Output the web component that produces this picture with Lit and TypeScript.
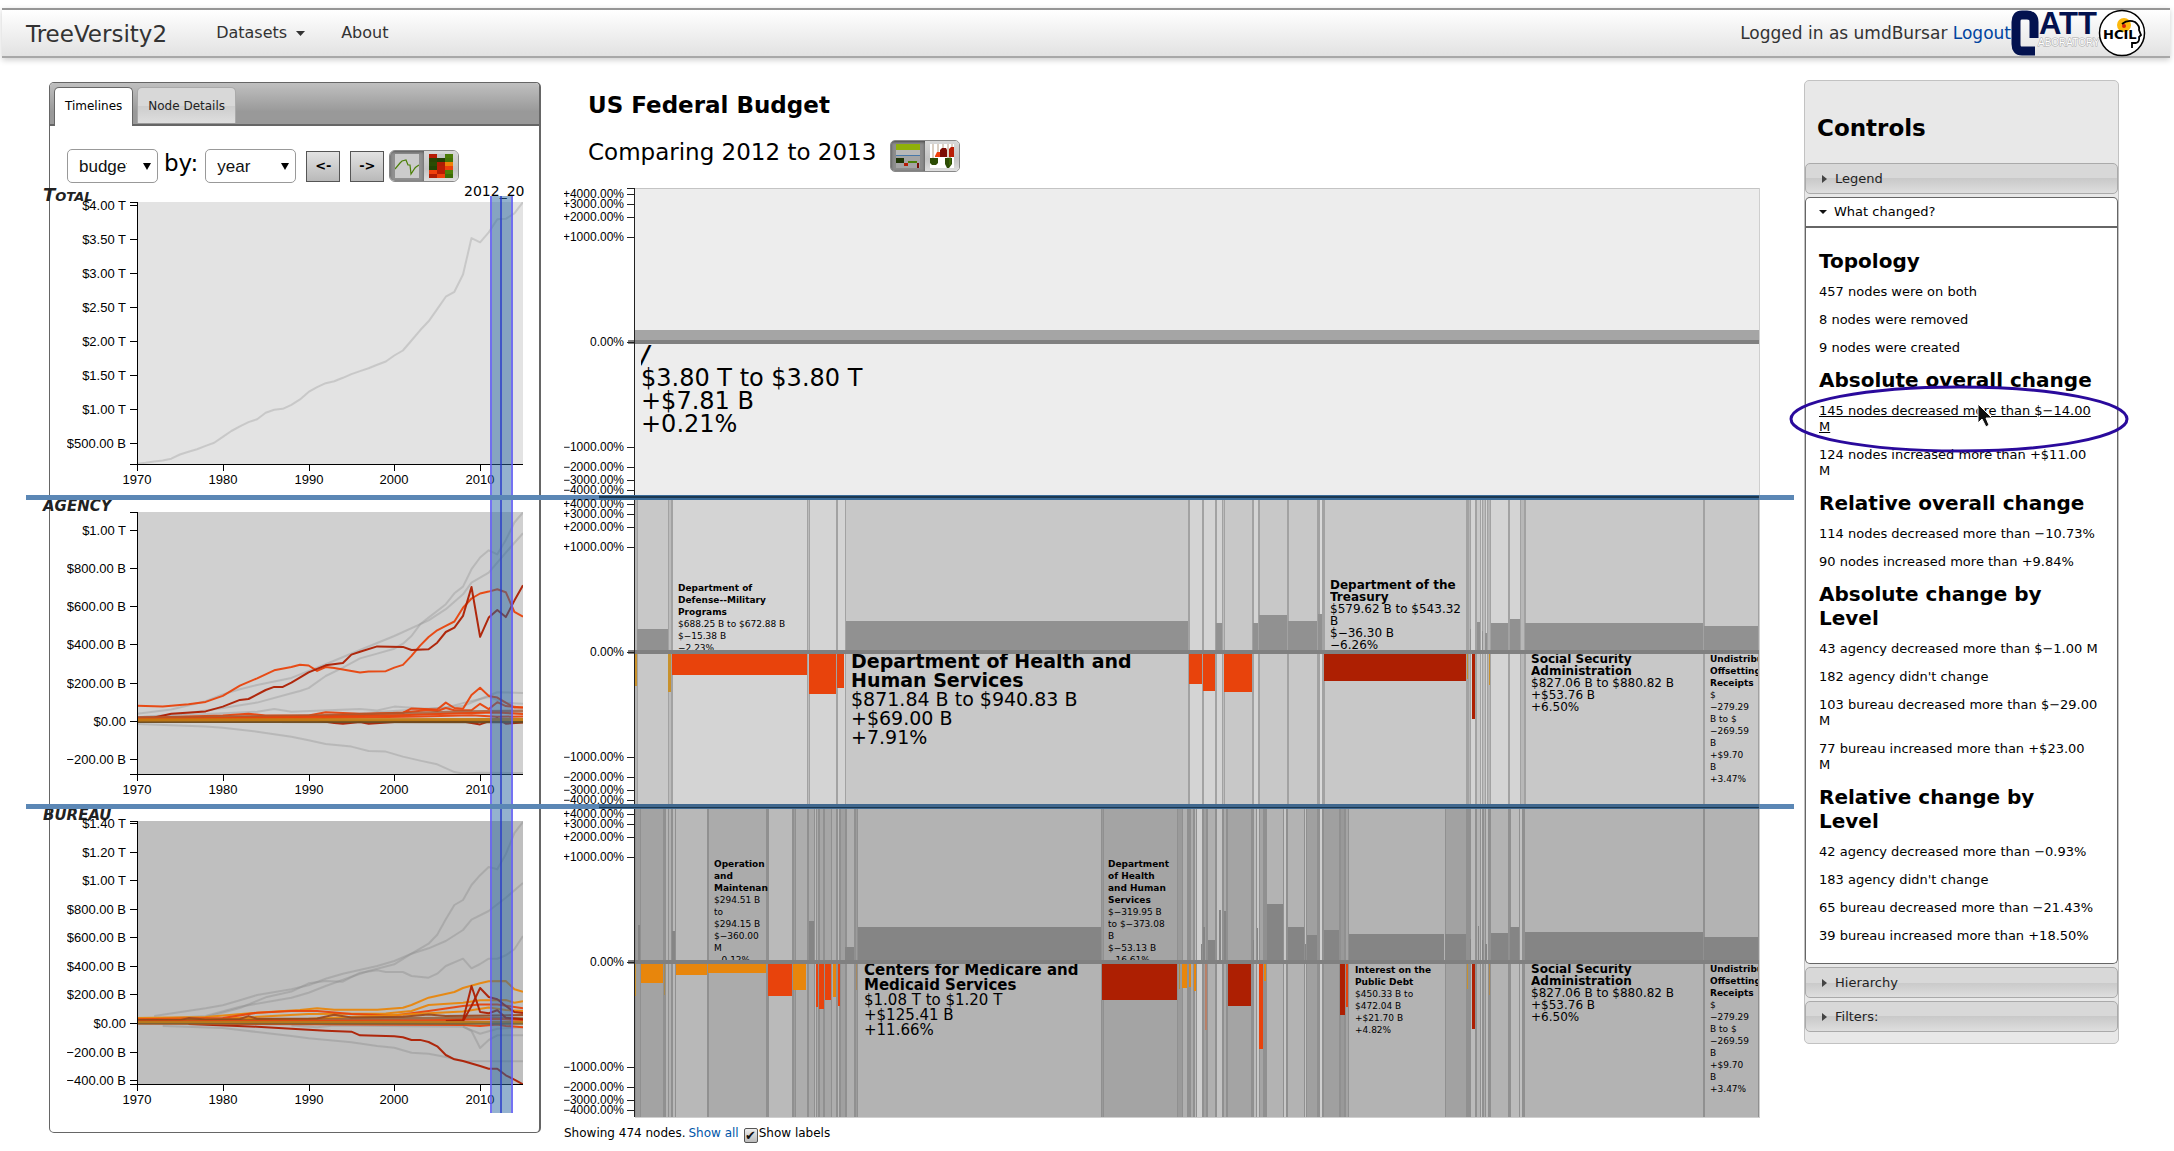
import { LitElement, html, svg, css } from "lit";
import { customElement } from "lit/decorators.js";

type Pt = [number, number];
interface Series { color: string; w?: number; o?: number; pts: Pt[] }
interface Chart {
  name: string; cls: string; nameY: number; top: number; bottom: number; zero: number;
  perBillion: number; fill: string; ticks: [number, string][]; series: Series[];
}

const GRAY = "#8c8c8c";
const ORANGE = "#e8430c";
const AMBER = "#e8860c";
const RED = "#ad1f02";

const yearly = (start: number, values: number[]): Pt[] => values.map((v, i) => [start + i, v] as Pt);

const charts: Chart[] = [
  {
    name: "Total", cls: "caps", nameY: 202, top: 203, bottom: 465, zero: 478, perBillion: 0.0679, fill: "#e3e3e3",
    ticks: [[4000, "$4.00 T"], [3500, "$3.50 T"], [3000, "$3.00 T"], [2500, "$2.50 T"], [2000, "$2.00 T"], [1500, "$1.50 T"], [1000, "$1.00 T"], [500, "$500.00 B"]],
    series: [{
      color: GRAY, o: 0.3,
      pts: yearly(1970, [195, 210, 230, 245, 269, 332, 371, 409, 458, 504, 590, 678, 745, 808, 851, 946, 990, 1004, 1064, 1143, 1253, 1324, 1381, 1409, 1461, 1515, 1560, 1601, 1652, 1701, 1789, 1863, 2011, 2160, 2293, 2472, 2655, 2728, 2982, 3518, 3457, 3603, 3796, 3803, 3883, 4050]),
    }],
  },
  {
    name: "AGENCY", cls: "", nameY: 512, top: 513, bottom: 775, zero: 722, perBillion: 0.1914, fill: "#d0d0d0",
    ticks: [[1000, "$1.00 T"], [800, "$800.00 B"], [600, "$600.00 B"], [400, "$400.00 B"], [200, "$200.00 B"], [0, "$0.00"], [-200, "$−200.00 B"]],
    series: [
      { color: GRAY, o: 0.35, pts: [[1970, 20], [1975, 35], [1980, 68], [1984, 96], [1988, 145], [1989, 157], [1990, 172], [1992, 235], [1994, 279], [1996, 327], [1998, 352], [2000, 378], [2001, 404], [2002, 444], [2003, 505], [2004, 540], [2006, 610], [2007, 667], [2008, 702], [2009, 793], [2010, 854], [2011, 892], [2012, 871], [2013, 946], [2014, 1037], [2015, 1090]] },
      { color: GRAY, o: 0.35, pts: [[1970, 38], [1974, 60], [1978, 103], [1980, 139], [1982, 166], [1984, 188], [1988, 225], [1992, 296], [1996, 371], [2000, 444], [2004, 526], [2006, 584], [2008, 662], [2009, 723], [2011, 775], [2013, 880], [2015, 981]] },
      { color: GRAY, o: 0.35, pts: [[1970, -15], [1974, -22], [1978, -28], [1980, -35], [1984, -56], [1988, -82], [1990, -101], [1992, -120], [1995, -134], [1997, -157], [1999, -160], [2001, -186], [2003, -207], [2005, -226], [2007, -267], [2008, -275], [2010, -270], [2015, -272]] },
      { color: GRAY, o: 0.35, pts: [[1970, 20], [1980, 40], [1984, 48], [1986, 62], [1988, 48], [1996, 62], [1998, 55], [2000, 75], [2004, 62], [2008, 78], [2010, 115], [2012, 150], [2015, 147]] },
      { color: GRAY, o: 0.35, pts: [[1984, 20], [1996, 40], [2006, 70], [2009, 105], [2011, 125], [2013, 95], [2015, 90]] },
      { color: ORANGE, pts: [[1970, 80], [1973, 76], [1976, 88], [1978, 100], [1980, 131], [1982, 185], [1984, 223], [1986, 265], [1988, 282], [1989, 294], [1990, 290], [1991, 262], [1992, 282], [1993, 277], [1996, 254], [1997, 258], [1999, 260], [2000, 279], [2001, 293], [2002, 340], [2003, 394], [2004, 439], [2005, 474], [2006, 497], [2007, 520], [2008, 592], [2009, 640], [2010, 666], [2011, 676], [2012, 688], [2013, 673], [2014, 570], [2015, 545]] },
      { color: RED, pts: [[1970, 19], [1972, 19], [1974, 38], [1978, 50], [1980, 75], [1982, 110], [1983, 115], [1985, 162], [1986, 178], [1987, 178], [1988, 200], [1990, 254], [1992, 291], [1994, 303], [1995, 347], [1996, 362], [1998, 390], [2001, 387], [2002, 371], [2004, 375], [2005, 409], [2006, 465], [2007, 488], [2008, 549], [2009, 700], [2010, 440], [2011, 540], [2012, 580], [2013, 543], [2014, 629], [2015, 709]] },
      { color: ORANGE, pts: [[1970, 16], [1980, 28], [1983, 38], [1985, 28], [1990, 28], [1992, 46], [1996, 38], [2001, 42], [2002, 66], [2005, 60], [2006, 96], [2007, 68], [2008, 64], [2009, 136], [2010, 174], [2011, 131], [2012, 122], [2013, 96], [2014, 70], [2015, 70]] },
      { color: ORANGE, pts: [[1970, 12], [1990, 26], [1996, 34], [2001, 44], [2004, 58], [2005, 52], [2006, 68], [2007, 56], [2009, 56], [2010, 90], [2011, 62], [2012, 98], [2013, 78], [2015, 70]] },
      { color: "#a65a32", w: 3, o: 0.8, pts: [[1970, 14], [1980, 22], [1990, 26], [2000, 38], [2008, 48], [2015, 52]] },
      { color: ORANGE, pts: [[1970, 8], [1985, 18], [2000, 28], [2008, 40], [2012, 44], [2015, 36]] },
      { color: ORANGE, pts: [[1970, 10], [1990, 14], [2003, 24], [2009, 30], [2012, 22], [2015, 24]] },
      { color: RED, pts: [[1970, 2], [1991, 2], [1993, -10], [1994, -14], [1996, -6], [1997, -14], [2000, -6], [2008, -2], [2010, -18], [2012, 14], [2013, -14], [2015, -8]] },
      { color: "#6b4a1e", w: 3, pts: [[1970, -2], [2015, -4]] },
      { color: "#c27a12", w: 3, pts: [[1970, 5], [2015, 8]] },
    ],
  },
  {
    name: "BUREAU", cls: "", nameY: 821, top: 822, bottom: 1085, zero: 1024, perBillion: 0.1429, fill: "#bfbfbf",
    ticks: [[1400, "$1.40 T"], [1200, "$1.20 T"], [1000, "$1.00 T"], [800, "$800.00 B"], [600, "$600.00 B"], [400, "$400.00 B"], [200, "$200.00 B"], [0, "$0.00"], [-200, "$−200.00 B"], [-400, "$−400.00 B"]],
    series: [
      { color: GRAY, o: 0.4, pts: [[1972, 49], [1978, 103], [1980, 124], [1982, 159], [1984, 196], [1988, 236], [1990, 264], [1992, 310], [1994, 345], [1998, 399], [2000, 434], [2002, 485], [2004, 523], [2006, 574], [2008, 651], [2009, 723], [2011, 784], [2013, 877], [2015, 980]] },
      { color: GRAY, o: 0.4, pts: [[1970, 20], [1978, 49], [1982, 114], [1988, 177], [1990, 212], [1992, 259], [1995, 324], [1997, 364], [2000, 411], [2002, 485], [2004, 555], [2005, 618], [2006, 726], [2007, 826], [2008, 861], [2009, 966], [2010, 1034], [2011, 1092], [2012, 1076], [2013, 1181], [2014, 1328], [2015, 1407]] },
      { color: GRAY, o: 0.4, pts: [[1978, 40], [1982, 105], [1985, 180], [1988, 220], [1990, 278], [1992, 294], [1994, 289], [1996, 352], [1998, 369], [1999, 357], [2001, 357], [2002, 329], [2004, 317], [2005, 345], [2006, 399], [2008, 450], [2009, 383], [2010, 413], [2011, 450], [2012, 450], [2013, 474], [2014, 516], [2015, 609]] },
      { color: GRAY, o: 0.4, pts: [[1973, -20], [1980, -35], [1984, -63], [1988, -91], [1990, -107], [1995, -135], [1998, -161], [2000, -173], [2002, -208], [2004, -215], [2006, -238], [2008, -266], [2015, -268]] },
      { color: GRAY, o: 0.4, pts: [[1988, -18], [1991, -30], [1993, -18], [2008, -26], [2010, -75], [2012, -40], [2015, -30]] },
      { color: GRAY, o: 0.4, pts: [[2008, -24], [2009, -56], [2010, -175], [2011, -119], [2012, -86], [2015, -86]] },
      { color: AMBER, pts: [[1970, 34], [1978, 42], [1984, 72], [1989, 92], [1991, 103], [1993, 93], [1998, 93], [2001, 107], [2002, 126], [2004, 177], [2007, 217], [2008, 245], [2010, 278], [2011, 292], [2013, 294], [2014, 236], [2015, 219]] },
      { color: AMBER, pts: [[1980, 30], [1990, 62], [1999, 66], [2002, 84], [2004, 126], [2008, 142], [2010, 159], [2013, 161], [2014, 142], [2015, 152]] },
      { color: ORANGE, pts: [[1970, 26], [1980, 34], [1984, 72], [1988, 84], [1991, 84], [1995, 62], [2000, 52], [2004, 84], [2008, 119], [2010, 130], [2012, 130], [2015, 103]] },
      { color: AMBER, pts: [[1970, 22], [1990, 30], [2000, 56], [2008, 80], [2011, 108], [2013, 90], [2015, 84]] },
      { color: "#9c4a20", pts: [[1970, 22], [1975, 20], [1976, 34], [1978, 24], [1982, 28], [1983, 48], [1984, 30], [1991, 32], [1993, 58], [1995, 38], [2001, 44], [2004, 60], [2006, 48], [2015, 56]] },
      { color: "#8a4a1c", w: 3, o: 0.7, pts: [[1970, 16], [1990, 22], [2000, 32], [2010, 36], [2015, 30]] },
      { color: ORANGE, pts: [[1970, 10], [1990, 16], [2003, 18], [2012, 28], [2015, 20]] },
      { color: RED, pts: [[2006, 14], [2008, 19], [2009, 259], [2010, 77], [2011, 68], [2012, 89], [2013, 37], [2015, 26]] },
      { color: RED, pts: [[2008, 12], [2009, 119], [2010, 245], [2011, 182], [2012, 166], [2013, 119], [2014, 77], [2015, 70]] },
      { color: RED, pts: [[1976, -6], [1984, -26], [1988, -40], [1992, -54], [1995, -61], [1996, -86], [2000, -93], [2001, -100], [2002, -119], [2003, -118], [2004, -133], [2005, -163], [2006, -224], [2007, -254], [2008, -266], [2010, -301], [2011, -320], [2012, -320], [2013, -366], [2014, -397], [2015, -429]] },
      { color: ORANGE, pts: [[1970, -4], [2008, -14], [2010, -22], [2012, -10], [2013, -20], [2015, -30]] },
      { color: "#7d6332", w: 3, pts: [[1970, 0], [2015, -2]] },
      { color: "#b87a1c", pts: [[1970, 8], [2015, 8]] },
    ],
  },
];

const years = [1970, 1980, 1990, 2000, 2010];
const yearX = (y: number) => 137 + ((y - 1970) * 386) / 45;

const fontStack = css`"DejaVu Sans", Verdana, sans-serif`;

@customElement("timelines-panel")
export class TimelinesPanel extends LitElement {
  static styles = css`
    :host { display: block; font-family: ${fontStack}; }
    .panel { border: 1px solid #666; border-right-width: 2px; border-radius: 5px; background: #fff; }
    .tabs {
      display: flex; gap: 4px; height: 37px; padding: 4px 4px 0; border-bottom: 2px solid #666;
      border-radius: 4px 4px 0 0; background: linear-gradient(#c0c0c0, #999 70%, #999);
    }
    .tab {
      font: 12px/16px ${fontStack}; border: 1px solid #aaa; border-bottom: 0; border-radius: 5px 5px 0 0;
      background: linear-gradient(#d8d8d8 50%, #ccc 50%, #dedede); color: #222; padding: 0 10px; height: 36px;
    }
    .tab.active { background: #fff; border-color: #666; color: #000; height: 39px; padding-bottom: 3px; }
    .tools { display: flex; align-items: center; height: 40px; padding: 20px 0 0 17px; }
    select {
      appearance: none; width: 91px; height: 34px; border: 1px solid #999; border-radius: 5px; color: #111;
      font: 17px/24px "Liberation Sans", Arial, sans-serif; padding: 2px 30px 0 11px; text-overflow: clip; background: #fff;
    }
    .pick { display: grid; align-items: center; }
    .pick > * { grid-area: 1 / 1; }
    .arrow { justify-self: end; margin-right: 7px; width: 8px; height: 8px; pointer-events: none; }
    .by { font-size: 23px; line-height: 28px; padding: 0 7px 6px 6px; }
    .step {
      width: 34px; height: 31px; border: 1px solid #555; background: linear-gradient(#e2e2e2, #b9b9b9);
      font: bold 13px/16px ${fontStack}; padding: 0; margin-left: 10px;
    }
    .group { display: flex; margin-left: 5px; border-radius: 6px; overflow: hidden; border: 1px solid #888; height: 30px; }
    .mode { display: grid; place-items: center; width: 34px; border: 0; padding: 0; background: linear-gradient(#d8d8d8, #c4c4c4 60%, #dedede); }
    .mode.on { background: #909090; box-shadow: inset 0 1px 3px #555; }
    .mode svg { width: 24px; height: 24px; display: block; }
    .charts { display: block; width: 100%; overflow: visible; }
    .tick { font: 13px "Liberation Sans", Arial, sans-serif; fill: #000; }
    .end { text-anchor: end; }
    .mid { text-anchor: middle; }
    .name { font: italic bold 15px ${fontStack}; fill: #222; }
    .name.caps { font: italic bold 18px ${fontStack}; font-variant: small-caps; }
    .brush-label { font: 14px ${fontStack}; fill: #000; }
    .axis { stroke: #000; stroke-width: 1; fill: none; shape-rendering: crispEdges; }
    .line { fill: none; stroke-linejoin: round; }
  `;

  private chart(c: Chart) {
    const y = (v: number) => c.zero - v * c.perBillion;
    const shown = c.top - 8;
    const shownHeight = c.bottom - shown + 8;
    return svg`
      <text class="name ${c.cls}" x="43" y=${c.nameY}>${c.name}</text>
      <rect x="137" y=${c.top} width="386" height=${c.bottom - c.top} fill=${c.fill}></rect>
      <svg x="137" y=${c.top} width="386" height=${c.bottom - c.top} viewBox=${`137 ${c.top} 386 ${c.bottom - c.top}`}>
        ${c.series.map((s) => svg`<polyline class="line" stroke=${s.color} stroke-width=${s.w ?? 2} stroke-opacity=${s.o ?? 0.95}
          points=${s.pts.map(([t, v]) => `${yearX(t).toFixed(1)},${y(v).toFixed(1)}`).join(" ")}></polyline>`)}
      </svg>
      <path class="axis" d=${`M130 ${c.top}H137V${c.bottom}M130 ${c.bottom}H523`}></path>
      <svg x="67" y=${shown} width="63" height=${shownHeight} viewBox=${`67 ${shown} 63 ${shownHeight}`}>
        ${c.ticks.map(([v, label]) => svg`<text class="tick end" x="126" y=${Math.round(y(v)) + 5}>${label}</text>`)}
      </svg>
      ${c.ticks.map(([v]) => svg`<path class="axis" d=${`M130 ${Math.round(y(v))}H137`}></path>`)}
      ${years.map((t) => svg`
        <path class="axis" d=${`M${Math.round(yearX(t))} ${c.bottom}v7`}></path>
        <text class="tick mid" x=${Math.round(yearX(t))} y=${c.bottom + 20}>${t}</text>`)}
    `;
  }

  render() {
    const heat = [
      ["#b81c04", "#c4c4c4", "#4c7c08"], ["#2c4404", "#244004", "#447408"], ["#2c4c04", "#b01c04", "#f08008"],
      ["#244404", "#b81c04", "#ec400c"], ["#f0400c", "#b81c04", "#4c8008"], ["#b01c04", "#ec400c", "#3c6c08"],
    ];
    return html`
      <section class="panel">
        <div class="tabs" role="tablist">
          <button class="tab active" role="tab" aria-selected="true">Timelines</button>
          <button class="tab" role="tab" aria-selected="false">Node Details</button>
        </div>
        <div class="tools">
          <span class="pick">
            <select id="measure" aria-label="Measure"><option>budget</option></select>
            <svg class="arrow" viewBox="0 0 8 8"><path d="M0 1H8L4 8Z"/></svg>
          </span>
          <label class="by" for="period">by:</label>
          <span class="pick">
            <select id="period"><option>year</option></select>
            <svg class="arrow" viewBox="0 0 8 8"><path d="M0 1H8L4 8Z"/></svg>
          </span>
          <button class="step">&lt;-</button>
          <button class="step">-&gt;</button>
          <div class="group">
            <button class="mode on" aria-label="Lines">
              <svg viewBox="0 0 24 24"><rect width="24" height="24" fill="#cbcbcb"/><path d="M0 15L5 9L7 7L11 6L13 11L15 11L16 20L20 14L21 13L24 11" fill="none" stroke="#4c8008" stroke-width="1.2"/></svg>
            </button>
            <button class="mode" aria-label="Heat map">
              <svg viewBox="0 0 24 24">${heat.map((r, i) => r.map((f, j) => svg`<rect x=${j * 8} y=${i * 4} width="8" height="4" fill=${f}></rect>`))}</svg>
            </button>
          </div>
        </div>
        <svg class="charts" viewBox="50 187 489 946">
          ${charts.map((c) => this.chart(c))}
          <text class="brush-label" x="464" y="197">2012_20</text>
          <rect x="490" y="197" width="23" height="917" fill="#2a66a0" fill-opacity="0.5"></rect>
          <path d="M491 197V1114M512 197V1114" stroke="#6a5cff" stroke-width="2" stroke-opacity="0.75"></path>
          <path d="M501 197V1114" stroke="#2a3cc8" stroke-width="2" stroke-opacity="0.75"></path>
        </svg>
      </section>
    `;
  }
}

interface Label { x: number; y: number; w: number; size: number; pitch: number; bold: string[]; text: string[]; slant?: boolean }
interface Row { top: number; bottom: number; zero: number; base: string; bar: string; cells: [number, number, string][]; bars: [number, number, number, string?][]; labels: Label[] }

const L = "#d4d4d4";
const M = "#c8c8c8";
const OCHRE = "#c8912c";

const undistributed = {
  bold: ["Undistributed", "Offsetting", "Receipts"],
  text: ["$", "−279.29", "B to $", "−269.59", "B", "+$9.70", "B", "+3.47%"],
};

const rows: Row[] = [
  {
    top: 188, bottom: 497, zero: 342, base: "#ededed", bar: "#a5a5a5",
    cells: [], bars: [[635, 1759, 330]],
    labels: [{ x: 641, y: 363, w: 400, size: 24, pitch: 23, slant: true, bold: ["/"], text: ["$3.80 T to $3.80 T", "+$7.81 B", "+0.21%"] }],
  },
  {
    top: 498, bottom: 806, zero: 652, base: "#a2a2a2", bar: "#919191",
    cells: [
      [635, 637, "#b4b4b4"], [638, 668, M], [669, 671, "#bbb"], [673, 807, L], [808, 809, "#bbb"], [810, 836, L], [838, 845, L],
      [846, 1188, M], [1190, 1202, L], [1204, 1215, L], [1217, 1222, L], [1223, 1224, "#bbb"], [1225, 1252, M], [1254, 1258, L],
      [1260, 1287, M], [1289, 1317, M], [1320, 1322, "#dadada"], [1325, 1466, M], [1469, 1470, "#b4b4b4"], [1471, 1475, L],
      [1477, 1480, M], [1481, 1482, L], [1483, 1485, "#bbb"], [1486, 1487, L], [1488, 1490, "#b4b4b4"], [1491, 1508, L],
      [1510, 1520, L], [1521, 1524, "#b8b8b8"], [1526, 1703, M], [1705, 1758, M],
    ],
    bars: [
      [635, 637, 686, OCHRE], [637, 668, 629], [668, 671, 692, OCHRE], [672, 807, 675, ORANGE], [809, 836, 694, ORANGE], [837, 844, 688, ORANGE],
      [846, 1188, 621], [1189, 1202, 684, ORANGE], [1203, 1215, 691, ORANGE], [1216, 1222, 623], [1224, 1252, 692, ORANGE],
      [1253, 1258, 623], [1259, 1287, 615], [1288, 1317, 621], [1318, 1322, 614], [1324, 1466, 681, RED], [1467, 1468, 679, OCHRE],
      [1470, 1471, 629], [1472, 1475, 719, RED], [1477, 1480, 622], [1482, 1483, 631], [1485, 1487, 633], [1489, 1490, 685, OCHRE],
      [1491, 1508, 623], [1510, 1520, 619], [1525, 1703, 623], [1704, 1758, 626],
    ],
    labels: [
      { x: 678, y: 591, w: 128, size: 9, pitch: 12, bold: ["Department of", "Defense--Military", "Programs"], text: ["$688.25 B to $672.88 B", "$−15.38 B", "−2.23%"] },
      { x: 851, y: 668, w: 330, size: 19, pitch: 19, bold: ["Department of Health and", "Human Services"], text: ["$871.84 B to $940.83 B", "+$69.00 B", "+7.91%"] },
      { x: 1330, y: 589, w: 136, size: 12, pitch: 12, bold: ["Department of the", "Treasury"], text: ["$579.62 B to $543.32", "B", "$−36.30 B", "−6.26%"] },
      { x: 1531, y: 663, w: 170, size: 12, pitch: 12, bold: ["Social Security", "Administration"], text: ["$827.06 B to $880.82 B", "+$53.76 B", "+6.50%"] },
      { x: 1710, y: 662, w: 48, size: 9, pitch: 12, ...undistributed },
    ],
  },
  {
    top: 807, bottom: 1117, zero: 962, base: "#909090", bar: "#858585",
    cells: [
      [636, 640, "#9c9c9c"], [641, 663, "#a3a3a3"], [666, 668, "#b4b4b4"], [669, 671, "#b0b0b0"], [673, 675, "#b8b8b8"], [676, 707, "#b8b8b8"],
      [709, 766, "#ababab"], [769, 792, "#bababa"], [794, 795, "#9c9c9c"], [796, 807, "#adadad"], [809, 814, "#a9a9a9"], [815, 816, "#bbb"],
      [817, 818, "#aaa"], [820, 823, "#a6a6a6"], [825, 831, "#a6a6a6"], [832, 836, "#adadad"], [838, 839, "#bbb"], [841, 845, "#a0a0a0"],
      [847, 854, "#b0b0b0"], [856, 857, "#9c9c9c"], [858, 1101, "#b3b3b3"], [1102, 1103, "#999"], [1104, 1177, "#a4a4a4"], [1178, 1182, "#9a9a9a"],
      [1183, 1187, "#b0b0b0"], [1191, 1193, "#aaa"], [1195, 1196, "#bbb"], [1197, 1202, "#cfcfcf"], [1204, 1206, "#a0a0a0"], [1208, 1215, "#b0b0b0"],
      [1217, 1222, "#c4c4c4"], [1224, 1226, "#aaa"], [1228, 1251, "#a4a4a4"], [1254, 1256, "#bbb"], [1257, 1259, "#c8c8c8"], [1260, 1263, "#a4a4a4"],
      [1267, 1283, "#b3b3b3"], [1284, 1286, "#c8c8c8"], [1288, 1304, "#b3b3b3"], [1305, 1306, "#c4c4c4"], [1307, 1317, "#a0a0a0"], [1320, 1322, "#d0d0d0"],
      [1324, 1339, "#a0a0a0"], [1341, 1344, "#999"], [1346, 1348, "#a4a4a4"], [1349, 1445, "#b3b3b3"], [1446, 1466, "#a2a2a2"], [1471, 1475, "#bbb"],
      [1477, 1480, "#b3b3b3"], [1481, 1482, "#c4c4c4"], [1484, 1485, "#aaa"], [1486, 1488, "#bbb"], [1491, 1508, "#b3b3b3"], [1511, 1519, "#bbb"],
      [1520, 1522, "#c0c0c0"], [1525, 1703, "#b3b3b3"], [1705, 1758, "#b3b3b3"],
    ],
    bars: [
      [635, 636, 996, OCHRE], [638, 640, 925], [641, 663, 983, AMBER], [664, 665, 995, "#a88a50"], [672, 675, 931], [676, 707, 975, AMBER],
      [708, 766, 973, AMBER], [768, 792, 996, ORANGE], [793, 806, 990, AMBER], [809, 814, 921], [816, 818, 1007, ORANGE], [819, 824, 1009, ORANGE],
      [825, 831, 1000, ORANGE], [833, 836, 997, AMBER], [838, 840, 1006, ORANGE], [845, 854, 947], [856, 857, 990, "#a88a60"], [858, 1101, 927],
      [1102, 1177, 1000, RED], [1179, 1180, 989, "#b08a40"], [1182, 1187, 988, AMBER], [1189, 1191, 987, AMBER], [1194, 1196, 991, AMBER],
      [1201, 1202, 944], [1203, 1205, 927], [1205, 1207, 1030, "#b88068"], [1208, 1215, 940], [1219, 1221, 910], [1224, 1226, 911],
      [1228, 1251, 1006, RED], [1253, 1254, 940], [1257, 1258, 928], [1259, 1263, 1049, ORANGE], [1264, 1266, 981, AMBER], [1267, 1283, 904],
      [1288, 1304, 927], [1305, 1306, 944], [1307, 1317, 935], [1324, 1339, 930], [1340, 1345, 1015, RED], [1346, 1348, 1007, ORANGE],
      [1349, 1444, 934], [1445, 1466, 934], [1467, 1468, 989, OCHRE], [1470, 1471, 939], [1472, 1475, 1029, RED], [1478, 1479, 926],
      [1482, 1483, 940], [1485, 1487, 944], [1489, 1490, 995, "#b08a50"], [1491, 1508, 933], [1510, 1519, 927], [1525, 1703, 932], [1704, 1758, 937],
    ],
    labels: [
      { x: 714, y: 867, w: 54, size: 9, pitch: 12, bold: ["Operation", "and", "Maintenance"], text: ["$294.51 B", "to", "$294.15 B", "$−360.00", "M", "−0.12%"] },
      { x: 864, y: 975, w: 234, size: 15, pitch: 15, bold: ["Centers for Medicare and", "Medicaid Services"], text: ["$1.08 T to $1.20 T", "+$125.41 B", "+11.66%"] },
      { x: 1108, y: 867, w: 68, size: 9, pitch: 12, bold: ["Department", "of Health", "and Human", "Services"], text: ["$−319.95 B", "to $−373.08", "B", "$−53.13 B", "−16.61%"] },
      { x: 1355, y: 973, w: 90, size: 9, pitch: 12, bold: ["Interest on the", "Public Debt"], text: ["$450.33 B to", "$472.04 B", "+$21.70 B", "+4.82%"] },
      { x: 1531, y: 973, w: 170, size: 12, pitch: 12, bold: ["Social Security", "Administration"], text: ["$827.06 B to $880.82 B", "+$53.76 B", "+6.50%"] },
      { x: 1710, y: 972, w: 48, size: 9, pitch: 12, ...undistributed },
    ],
  },
];

const percentTicks: [number, string][] = [
  [-148, "+4000.00%"], [-138, "+3000.00%"], [-125, "+2000.00%"], [-105, "+1000.00%"], [0, "0.00%"],
  [105, "−1000.00%"], [125, "−2000.00%"], [138, "−3000.00%"], [148, "−4000.00%"],
];

@customElement("budget-map")
export class BudgetMap extends LitElement {
  static styles = css`
    :host { display: block; font-family: ${fontStack}; color: #000; }
    .head { padding-left: 24px; height: 105px; box-sizing: border-box; padding-top: 9px; }
    h1 { margin: 0; font-size: 23px; line-height: 28px; font-weight: bold; }
    .sub { display: flex; align-items: center; gap: 14px; margin-top: 18px; height: 32px; font-size: 23px; line-height: 28px; }
    .sub p { margin: 0 0 2px; }
    .group { display: flex; border-radius: 5px; overflow: hidden; border: 1px solid #888; height: 30px; margin-top: 5px; }
    .mode { display: grid; place-items: center; width: 34px; border: 0; padding: 0; background: linear-gradient(#d8d8d8, #c4c4c4 60%, #dedede); }
    .mode.on { background: #8c8c8c; box-shadow: inset 0 1px 3px #444; }
    .mode svg { width: 24px; height: 24px; display: block; }
    .map { display: block; width: 100%; overflow: visible; position: relative; }
    .tick { font: 12px "Liberation Sans", Arial, sans-serif; text-anchor: end; }
    .b { font-weight: bold; }
    .i { font-style: italic; }
    .crisp { shape-rendering: crispEdges; }
    .foot { display: flex; align-items: center; height: 28px; font-size: 12px; line-height: 16px; }
    a { color: #0055a8; text-decoration: none; margin: 0 5px 0 3px; }
    .foot label { display: flex; align-items: center; }
    input { appearance: none; width: 14px; height: 15px; margin: 5px 1px 0 0; border: 1px solid #555; border-radius: 2px; background: linear-gradient(#eee, #bbb); display: grid; place-items: center; }
    input:checked::before { content: "✔"; font-size: 13px; line-height: 13px; color: #111; }
  `;

  private label(l: Label, r: Row) {
    const lines = [...l.bold.map((t) => ({ t, b: true })), ...l.text.map((t) => ({ t, b: false }))];
    return svg`<svg x=${l.x} y=${r.top} width=${l.w} height=${r.bottom - r.top} font-size=${l.size}>
      ${lines.map((n, i) => svg`<text class="${n.b ? "b" : ""} ${n.b && l.slant ? "i" : ""}" x="0" y=${l.y - r.top + i * l.pitch}>${n.t}</text>`)}
    </svg>`;
  }

  private row(r: Row) {
    return svg`
      <g class="crisp">
        <rect x="635" y=${r.top} width="1124" height=${r.bottom - r.top} fill=${r.base}></rect>
        ${r.cells.map(([a, b, f]) => svg`<rect x=${a} y=${r.top} width=${b - a} height=${r.bottom - r.top} fill=${f}></rect>`)}
        ${r.bars.map(([a, b, y, f]) => y < r.zero
          ? svg`<rect x=${a} y=${y} width=${b - a} height=${r.zero - y} fill=${f ?? r.bar}></rect>`
          : svg`<rect x=${a} y=${r.zero} width=${b - a} height=${y - r.zero} fill=${f ?? r.bar}></rect>`)}
      </g>
      ${r.labels.map((l) => this.label(l, r))}
      <g class="crisp">
        <rect x="628" y=${r.zero - 2} width="1131" height="4" fill="#808080"></rect>
        <path d=${`M627 ${r.top}H635M634 ${r.top}V${r.bottom}` + percentTicks.map(([d]) => `M627 ${r.zero + d}h7`).join("")} stroke="#222" stroke-width="1" fill="none"></path>
      </g>
      <svg x="564" y=${r.top} width="62" height=${r.bottom - r.top}>
        ${percentTicks.map(([d, t]) => svg`<text class="tick" x="60" y=${r.zero - r.top + d + 4}>${t}</text>`)}
      </svg>
    `;
  }

  render() {
    return html`
      <div class="head">
        <h1>US Federal Budget</h1>
        <div class="sub">
          <p>Comparing 2012 to 2013</p>
          <div class="group">
            <button class="mode on" aria-label="Stacked map">
              <svg viewBox="0 0 24 24"><rect width="24" height="24" fill="#a4a4a4"/><rect width="24" height="6" fill="#8fb008"/><rect y="6" width="24" height="5" fill="#b8b8b8"/><path d="M0 11.5H24" stroke="#4878a8"/><rect y="14" width="8" height="5" fill="#203404"/><rect x="12" y="17" width="9" height="2" fill="#4c8008"/><rect x="8" y="19" width="4" height="3" fill="#b81c04"/><rect x="21" y="19" width="2" height="5" fill="#780c04"/></svg>
            </button>
            <button class="mode" aria-label="Bar map">
              <svg viewBox="0 0 24 24"><rect width="24" height="24" fill="#fff"/><path d="M3 0V14M8 0V9M13 0V4M18 0V14M22 0V5" stroke="#b8a088"/><path d="M0 14H8V19L6 21H2L0 19Z" fill="#2c4c04"/><path d="M5 12L7 8H11V13H5Z" fill="#f0400c"/><path d="M10 6L12 4H16L17 6V13H10Z" fill="#7c0c04"/><path d="M19 5L21 3H24V13H19Z" fill="#b81c04"/><path d="M15 14H22V20L19 24H17L15 20Z" fill="#2c4c04"/><path d="M20 13V21" stroke="#4c8008"/></svg>
            </button>
          </div>
        </div>
      </div>
      <svg class="map" viewBox="564 187 1196 932">
        <rect x="26" y="495" width="1768" height="5" fill="#5b87b5"></rect>
        <rect x="26" y="804" width="1768" height="5" fill="#5b87b5"></rect>
        ${rows.map((r) => this.row(r))}
        <path class="crisp" d="M635 188H1759V1117H635" fill="none" stroke="#888" stroke-opacity="0.4"></path>
        <rect x="599" y="495" width="1160" height="5" fill="#3a6a98"></rect>
        <rect x="599" y="496" width="1160" height="2" fill="#1c3850"></rect>
        <rect x="599" y="804" width="1160" height="5" fill="#40688f"></rect>
        <rect x="599" y="807" width="1160" height="1" fill="#1c3850"></rect>
      </svg>
      <div class="foot">
        <span>Showing 474 nodes.</span><a href="#all">Show all</a>
        <label><input type="checkbox" checked />Show labels</label>
      </div>
    `;
  }
}

@customElement("controls-panel")
export class ControlsPanel extends LitElement {
  static styles = css`
    :host { display: block; position: relative; font-family: ${fontStack}; color: #000; }
    .box { background: #e8e8e8; border: 1px solid #c2c2c2; border-radius: 5px; padding: 0 0 11px; display: flex; flex-direction: column; gap: 3px; }
    h2 { margin: 0; font-size: 23px; line-height: 28px; padding: 33px 12px 18px; }
    .bar {
      display: flex; align-items: center; gap: 8px; width: 100%; height: 31px; padding: 0 0 0 15px; border: 1px solid #aaa; border-radius: 5px;
      background: linear-gradient(#d8d8d8 50%, #c9c9c9 50%, #dedede); font: 13px/16px ${fontStack}; color: #222; text-align: left;
    }
    .bar svg { width: 6px; height: 8px; }
    .bar.open { background: #fff; border-color: #666; border-bottom-width: 2px; border-radius: 5px 5px 0 0; color: #000; padding-left: 13px; gap: 7px; }
    .bar.open svg { width: 8px; height: 8px; }
    .body { background: #fff; border: 1px solid #666; border-top: 0; border-radius: 0 0 5px 5px; padding: 21px 19px 7px 13px; }
    h3 { margin: 0 0 11px; font-size: 20px; line-height: 24px; font-weight: bold; }
    p { margin: 0 0 12px; font-size: 13px; line-height: 16px; }
    .hot { text-decoration: underline; }
    .ring { position: absolute; left: -16px; top: 304px; width: 342px; height: 70px; pointer-events: none; }
    .pointer { position: absolute; left: 173px; top: 323px; width: 16px; height: 25px; pointer-events: none; }
  `;

  render() {
    const groups: [string, string[]][] = [
      ["Topology", ["457 nodes were on both", "8 nodes were removed", "9 nodes were created"]],
      ["Absolute overall change", ["145 nodes decreased more than $−14.00 M", "124 nodes increased more than +$11.00 M"]],
      ["Relative overall change", ["114 nodes decreased more than −10.73%", "90 nodes increased more than +9.84%"]],
      ["Absolute change by Level", ["43 agency decreased more than $−1.00 M", "182 agency didn't change", "103 bureau decreased more than $−29.00 M", "77 bureau increased more than +$23.00 M"]],
      ["Relative change by Level", ["42 agency decreased more than −0.93%", "183 agency didn't change", "65 bureau decreased more than −21.43%", "39 bureau increased more than +18.50%"]],
    ];
    const header = (t: string) => html`<button class="bar" aria-expanded="false"><svg viewBox="0 0 6 8"><path d="M1 0L6 4L1 8Z" fill="#444"/></svg>${t}</button>`;
    return html`
      <div class="box">
        <h2>Controls</h2>
        ${header("Legend")}
        <div>
          <button class="bar open" aria-expanded="true"><svg viewBox="0 0 8 8"><path d="M0 2H8L4 6Z" fill="#111"/></svg>What changed?</button>
          <div class="body">
            ${groups.map(([h, items]) => html`<h3>${h}</h3>${items.map((t) => html`<p class=${t.startsWith("145") ? "hot" : ""}>${t}</p>`)}`)}
          </div>
        </div>
        ${header("Hierarchy")}
        ${header("Filters:")}
      </div>
      <svg class="ring" viewBox="0 0 342 70"><ellipse cx="171" cy="35" rx="168" ry="32" fill="none" stroke="#2a0a9c" stroke-width="3"/></svg>
      <svg class="pointer" viewBox="0 0 16 25"><path d="M1 1V20L5 16L9 24L12 22L9 15H15Z" fill="#111" stroke="#fff" stroke-width="1"/></svg>
    `;
  }
}

@customElement("app-root")
export class AppRoot extends LitElement {
  static styles = css`
    :host { display: block; background: #fff; font-family: ${fontStack}; padding: 8px 0 0; }
    header {
      display: flex; align-items: center; height: 46px; margin: 0 4px 0 2px; padding: 0 24px 0 24px; color: #333;
      border-top: 2px solid #969696; border-bottom: 2px solid #a8a8a8; background: linear-gradient(#fff, #e2e2e2);
      box-shadow: 0 2px 6px rgba(0, 0, 0, 0.2); font-size: 16px; line-height: 20px;
    }
    .brand { font-size: 23px; line-height: 28px; color: #333; text-decoration: none; padding-top: 2px; }
    nav { display: flex; flex: 1; gap: 36px; margin-left: 49px; }
    nav a { color: #333; text-decoration: none; display: flex; align-items: center; gap: 9px; }
    .caret { width: 9px; height: 5px; }
    .who { font-size: 17px; }
    .who a { color: #0044a0; text-decoration: none; }
    .catt { width: 87px; height: 46px; display: block; overflow: visible; }
    .hcil { width: 48px; height: 48px; display: block; }
    .word { font: bold 31px "Liberation Sans", Arial, sans-serif; fill: #03124f; }
    .lab { font: 10px "Liberation Sans", Arial, sans-serif; fill: #fff; stroke: #aaa; stroke-width: 1px; paint-order: stroke; }
    .hc { font: bold 13px ${fontStack}; fill: #000; }
    main {
      display: grid; grid-template-columns: minmax(0, 492fr) minmax(0, 1196fr) 336px; column-gap: 23px;
      align-items: start; padding: 22px 55px 16px 49px;
    }
    timelines-panel { padding-top: 2px; }
    budget-map { padding-top: 2px; }
    controls-panel { margin-left: 21px; }
  `;

  render() {
    return html`
      <header>
        <a class="brand" href="#home">TreeVersity2</a>
        <nav>
          <a href="#datasets">Datasets <svg class="caret" viewBox="0 0 9 5"><path d="M0 0H9L4.500 5Z" fill="#333"/></svg></a>
          <a href="#about">About</a>
        </nav>
        <span class="who">Logged in as umdBursar <a href="#logout">Logout</a></span>
        <svg class="catt" viewBox="0 0 87 46" role="img" aria-label="CATT Laboratory">
          <path d="M23 28V12Q23 5 16 5H11Q5 5 5 12V34Q5 41 11 41H24" fill="none" stroke="#03124f" stroke-width="9"/>
          <text class="word" x="28" y="24">ATT</text>
          <text class="lab" x="27" y="36">ABORATORY</text>
        </svg>
        <svg class="hcil" viewBox="0 0 48 48" role="img" aria-label="HCIL">
          <circle cx="24" cy="24" r="22.500" fill="#fff" stroke="#000" stroke-width="1.500"/>
          <circle cx="26" cy="16" r="7" fill="#fcb80c"/><circle cx="26" cy="17" r="2" fill="#d8200c"/>
          <path d="M24 15Q30 10 37 13Q42 17 41 21L43 26L41 28Q42 33 38 34H34V39" fill="none" stroke="#000" stroke-width="1.800"/>
          <text class="hc" x="5" y="30">HCIL</text>
        </svg>
      </header>
      <main>
        <timelines-panel></timelines-panel>
        <budget-map></budget-map>
        <controls-panel></controls-panel>
      </main>
    `;
  }
}
